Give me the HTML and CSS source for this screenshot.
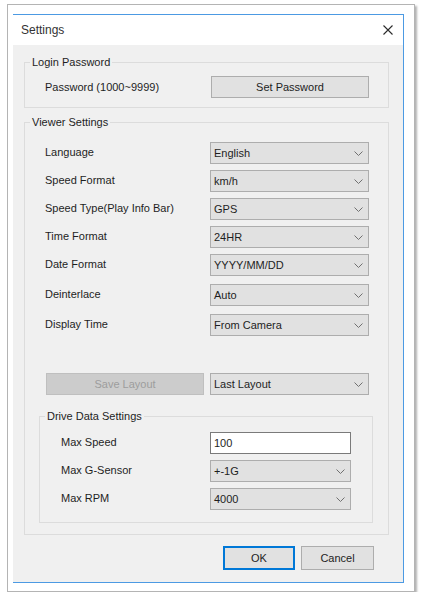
FILE: index.html
```html
<!DOCTYPE html>
<html lang="en">
<head>
  <meta charset="UTF-8" />
  <meta name="viewport" content="width=device-width, initial-scale=1.0"/>
  <title>Settings</title>
  <link rel="stylesheet" href="styles.css">
</head>
<body>

  <div class="frame">
    <div class="dialog">
      <div class="titlebar">
        <span class="title">Settings</span>
        <svg class="close" width="10" height="10" viewBox="0 0 10 10">
          <path d="M0.5 0.5 L9.5 9.5 M9.5 0.5 L0.5 9.5" stroke="#2b2b2b" stroke-width="1.1" fill="none"/>
        </svg>
      </div>

      <div class="content">
        <fieldset class="group login">
          <legend>Login Password</legend>
          <div class="login-row">
            <span class="label">Password (1000~9999)</span>
            <button class="btn">Set Password</button>
          </div>
        </fieldset>

        <fieldset class="group viewer">
          <legend>Viewer Settings</legend>
          <div class="rows">
            <div class="row">
              <span class="label">Language</span>
              <div class="combo"><span>English</span><svg width="9" height="5" viewBox="0 0 9 5"><path d="M0.5 0.5 L4.5 4.5 L8.5 0.5" stroke="#707070" fill="none"/></svg></div>
            </div>
            <div class="row">
              <span class="label">Speed Format</span>
              <div class="combo"><span>km/h</span><svg width="9" height="5" viewBox="0 0 9 5"><path d="M0.5 0.5 L4.5 4.5 L8.5 0.5" stroke="#707070" fill="none"/></svg></div>
            </div>
            <div class="row">
              <span class="label">Speed Type(Play Info Bar)</span>
              <div class="combo"><span>GPS</span><svg width="9" height="5" viewBox="0 0 9 5"><path d="M0.5 0.5 L4.5 4.5 L8.5 0.5" stroke="#707070" fill="none"/></svg></div>
            </div>
            <div class="row">
              <span class="label">Time Format</span>
              <div class="combo"><span>24HR</span><svg width="9" height="5" viewBox="0 0 9 5"><path d="M0.5 0.5 L4.5 4.5 L8.5 0.5" stroke="#707070" fill="none"/></svg></div>
            </div>
            <div class="row">
              <span class="label">Date Format</span>
              <div class="combo"><span>YYYY/MM/DD</span><svg width="9" height="5" viewBox="0 0 9 5"><path d="M0.5 0.5 L4.5 4.5 L8.5 0.5" stroke="#707070" fill="none"/></svg></div>
            </div>
            <div class="row spaced">
              <span class="label">Deinterlace</span>
              <div class="combo"><span>Auto</span><svg width="9" height="5" viewBox="0 0 9 5"><path d="M0.5 0.5 L4.5 4.5 L8.5 0.5" stroke="#707070" fill="none"/></svg></div>
            </div>
            <div class="row spaced">
              <span class="label">Display Time</span>
              <div class="combo"><span>From Camera</span><svg width="9" height="5" viewBox="0 0 9 5"><path d="M0.5 0.5 L4.5 4.5 L8.5 0.5" stroke="#707070" fill="none"/></svg></div>
            </div>

            <div class="row layout-row">
              <button class="btn" disabled>Save Layout</button>
              <div class="combo"><span>Last Layout</span><svg width="9" height="5" viewBox="0 0 9 5"><path d="M0.5 0.5 L4.5 4.5 L8.5 0.5" stroke="#707070" fill="none"/></svg></div>
            </div>
          </div>

          <fieldset class="group drive">
            <legend>Drive Data Settings</legend>
            <div class="rows drive-rows">
              <div class="row">
                <span class="label">Max Speed</span>
                <input class="field" type="text" value="100" />
              </div>
              <div class="row">
                <span class="label">Max G-Sensor</span>
                <div class="combo"><span>+-1G</span><svg width="9" height="5" viewBox="0 0 9 5"><path d="M0.5 0.5 L4.5 4.5 L8.5 0.5" stroke="#707070" fill="none"/></svg></div>
              </div>
              <div class="row">
                <span class="label">Max RPM</span>
                <div class="combo"><span>4000</span><svg width="9" height="5" viewBox="0 0 9 5"><path d="M0.5 0.5 L4.5 4.5 L8.5 0.5" stroke="#707070" fill="none"/></svg></div>
              </div>
            </div>
          </fieldset>
        </fieldset>

        <div class="actions">
          <button class="btn ok">OK</button>
          <button class="btn cancel">Cancel</button>
        </div>
      </div>
    </div>
  </div>

</body>
</html>
```

FILE: styles.css
```css
* {
  box-sizing: border-box;
}

body {
  margin: 0;
  background: #fff;
  font-family: "Liberation Sans", Arial, sans-serif;
  font-size: 11px;
  color: #1e1e1e;
}

.frame {
  width: 408px;
  height: 588px;
  margin: 4px 0 0 7px;
  padding: 9px 0 0 5px;
  border: 1px solid #b4b4b4;
  background: #fff;
  box-shadow: 2px 2px 2px rgba(0, 0, 0, 0.3);
}

.dialog {
  width: 391px;
  height: 569px;
  display: flex;
  flex-direction: column;
  background: #f0f0f0;
  border-top: 1px solid #4c9ae3;
  border-right: 1px solid #4c9ae3;
  border-bottom: 1px solid #4c9ae3;
}

.titlebar {
  height: 30px;
  flex-shrink: 0;
  display: flex;
  align-items: center;
  justify-content: space-between;
  padding: 0 10px 0 8px;
  background: #fff;
}

.title {
  font-size: 12px;
  color: #333;
}

.content {
  flex: 1;
  padding: 9px 14px 12px 11px;
}

fieldset.group {
  margin: 0;
  padding: 0;
  min-width: 0;
  border: 1px solid #dcdcdc;
}

legend {
  margin-left: 5px;
  padding: 0 2px;
  line-height: 16px;
}

.login-row {
  display: grid;
  grid-template-columns: 1fr 158px;
  align-items: center;
  padding: 6px 19px 9px 20px;
}

.viewer {
  margin-top: 6px !important;
  padding-bottom: 11px !important;
}

.rows {
  display: flex;
  flex-direction: column;
  gap: 6px;
  padding: 12px 19px 0 20px;
}

.row {
  display: grid;
  grid-template-columns: 1fr 159px;
  align-items: center;
}

.row .label {
  margin-top: -2px;
}

.row.spaced {
  margin-top: 2px;
}

.layout-row {
  margin-top: 31px;
}

.layout-row .btn {
  width: 158px;
  justify-self: end;
  margin-right: 6px;
}

.drive {
  margin: 13px 15px 0 14px !important;
}

.drive-rows {
  padding: 8px 21px 12px 21px;
}

.drive-rows .row {
  grid-template-columns: 1fr 141px;
}

.combo {
  height: 22px;
  display: flex;
  align-items: center;
  justify-content: space-between;
  padding: 0 5px 0 3px;
  background: #e1e1e1;
  border: 1px solid #adadad;
}

.field {
  height: 22px;
  margin: 0;
  padding: 0 3px;
  font: inherit;
  color: inherit;
  background: #fff;
  border: 1px solid #7a7a7a;
  outline: none;
}

.btn {
  height: 22px;
  padding: 0;
  font: inherit;
  color: #1e1e1e;
  background: #e1e1e1;
  border: 1px solid #adadad;
}

.btn:disabled {
  color: #9d9d9d;
  background: #cccccc;
  border-color: #bfbfbf;
}

.actions {
  display: flex;
  justify-content: flex-end;
  gap: 6px;
  margin-top: 11px;
  padding-right: 15px;
}

.actions .btn {
  height: 24px;
}

.ok {
  width: 72px;
  border-color: #0078d7;
  box-shadow: inset 0 0 0 1px #0078d7;
}

.cancel {
  width: 73px;
}
```
